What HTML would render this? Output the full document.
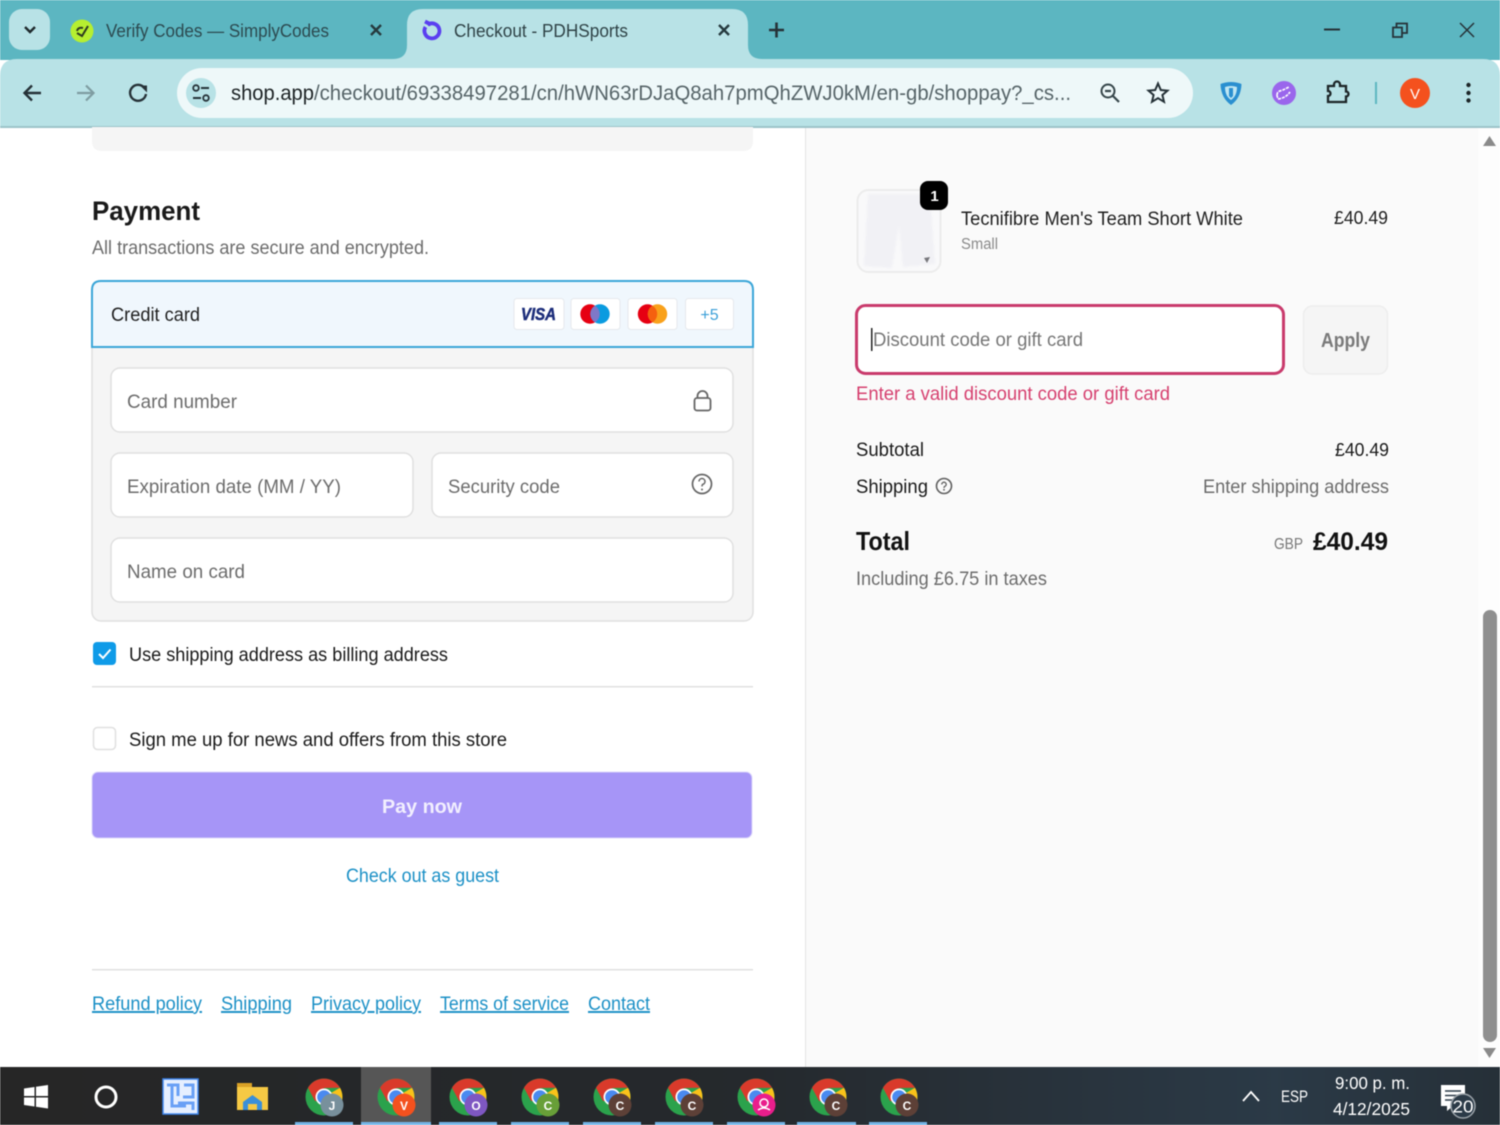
<!DOCTYPE html>
<html lang="en"><head><meta charset="utf-8"><title>Checkout - PDHSports</title>
<style>
html,body{margin:0;padding:0;width:1500px;height:1125px;overflow:hidden;background:#fff}
svg{display:block;filter:blur(.45px)}
text{font-family:"Liberation Sans",sans-serif;white-space:pre}
.g{fill:#6c6c6c}.d{fill:#1a1a1a}.l{fill:#1b90c6;text-decoration:underline}
</style></head><body>
<svg width="1500" height="1125" viewBox="0 0 1500 1125" xmlns="http://www.w3.org/2000/svg">
<defs>
<g id="ch">
<circle r="18.500" fill="#2ba24c"/>
<path d="M0,0L16,-9.200A18.500,18.500 0 0 1 3,18.200Z" fill="#f9c21a"/>
<path d="M-16,-9.200A18.500,18.500 0 0 1 16,-9.200L0,-9L-7,4L-9,4Z" fill="#d93a2b"/>
<circle r="8.500" fill="#fff"/><circle r="6.800" fill="#4a8af0"/>
</g>
<filter id="soft"><feGaussianBlur stdDeviation="1.200"/></filter>
</defs>

<!-- page -->
<rect width="1500" height="1125" fill="#fff"/>
<rect x="806" y="127" width="672" height="940" fill="#fafafa"/>
<rect x="805" y="127" width="1" height="940" fill="#e3e3e3"/>
<rect x="1478" y="127" width="22" height="940" fill="#fdfdfd"/>
<path d="M1483,146L1489.500,136L1496,146Z" fill="#8a8a8a"/>
<path d="M1483,1048L1489.500,1058L1496,1048Z" fill="#8a8a8a"/>
<rect x="1483" y="610" width="14" height="432" rx="7" fill="#8f8f8f"/>

<!-- chrome frame -->
<rect width="1500" height="60" fill="#5cb6c1"/>
<path d="M0,127V76Q0,59 17,59H1483Q1500,59 1500,76V127Z" fill="#b8e2e6"/>
<rect y="126" width="1500" height="2" fill="#9cc3c9"/>
<rect x="9" y="9" width="41" height="41" rx="13" fill="#b8e2e6"/>
<path d="M25,27L30,32L35,27" fill="none" stroke="#1f2a2d" stroke-width="2.400"/>
<path d="M393,59Q407,59 407,45V25Q407,9 423,9H732Q748,9 748,25V45Q748,59 762,59Z" fill="#b8e2e6"/>

<circle cx="82" cy="31" r="11.500" fill="#b6ef30"/>
<path d="M77,33L82,36L88,26M77,31Q78,27 83,28" fill="none" stroke="#2d3a20" stroke-width="2"/>
<text x="106" y="37" font-size="18.500" fill="#2c4a50" textLength="223" lengthAdjust="spacingAndGlyphs">Verify Codes — SimplyCodes</text>
<path d="M371,25L381,35M381,25L371,35" stroke="#263a3e" stroke-width="2.400"/>
<path d="M427.500,24.800A7.500,7.500 0 1 1 425.500,27M425,21.500L431,24.500" fill="none" stroke="#5a3ff0" stroke-width="3.800"/>
<text x="454" y="37" font-size="18.500" fill="#2f4347" textLength="174" lengthAdjust="spacingAndGlyphs">Checkout - PDHSports</text>
<path d="M719,25L729,35M729,25L719,35" stroke="#263a3e" stroke-width="2.400"/>
<path d="M769,30H784M776.500,22.500V37.500" stroke="#263238" stroke-width="2.600"/>
<path d="M1324,29.500H1340" stroke="#263238" stroke-width="2"/>
<path d="M1393,27.500V37H1402V27.500ZM1396.500,27.500V23.500H1407V33H1402" fill="none" stroke="#263238" stroke-width="1.800"/>
<path d="M1460,23L1474,37M1474,23L1460,37" stroke="#263238" stroke-width="1.500"/>

<!-- toolbar -->
<path d="M41,93H25M32,85.500L24.500,93L32,100.500" fill="none" stroke="#263238" stroke-width="2.400"/>
<path d="M93,93H77M86,85.500L93.500,93L86,100.500" fill="none" stroke="#7f9da2" stroke-width="2.200"/>
<path d="M144.500,88A8,8 0 1 0 146,94" fill="none" stroke="#263238" stroke-width="2.400"/>
<path d="M140,85.500H147V92.500Z" fill="#263238"/>
<rect x="177" y="68" width="1016" height="50" rx="25" fill="#eef8f9"/>
<circle cx="201" cy="93" r="15" fill="#b8e2e6"/>
<circle cx="196" cy="88" r="2.800" fill="none" stroke="#263238" stroke-width="1.800"/>
<path d="M201,88H209M193,98H201" stroke="#263238" stroke-width="2"/>
<circle cx="206" cy="98" r="2.800" fill="none" stroke="#263238" stroke-width="1.800"/>
<text x="231" y="100" font-size="21" fill="#1c2224" textLength="83" lengthAdjust="spacingAndGlyphs">shop.app</text>
<text x="314" y="100" font-size="21" fill="#566468" textLength="757" lengthAdjust="spacingAndGlyphs">/checkout/69338497281/cn/hWN63rDJaQ8ah7pmQhZWJ0kM/en-gb/shoppay?_cs...</text>
<circle cx="1108" cy="91" r="6.500" fill="none" stroke="#37474b" stroke-width="2"/>
<path d="M1105,91H1111M1113,96L1119,102" stroke="#37474b" stroke-width="2.200"/>
<path d="M1158,83.500L1160.800,90L1167.500,90.600L1162.400,95L1164,101.800L1158,98.200L1152,101.800L1153.600,95L1148.500,90.600L1155.200,90Z" fill="none" stroke="#263238" stroke-width="2"/>
<path d="M1220.500,84Q1231,80 1241.500,84Q1241,98 1231,105Q1221,98 1220.500,84Z" fill="#2a8fd0"/>
<path d="M1225,87Q1231,85 1237,87Q1237,96 1231,100Q1225,96 1225,87Z" fill="#bfe6f2"/>
<path d="M1229,88H1233V96L1231,98L1229,96Z" fill="#2a8fd0"/>
<circle cx="1284" cy="93" r="12" fill="#9a66ec"/>
<path d="M1277,95Q1277,91 1282,90.500L1289,87M1278,99Q1286,98 1290,92M1277,95Q1277,98 1279,98" fill="none" stroke="#fff" stroke-width="1.600" stroke-dasharray="3 1"/>
<path d="M1328,86H1334V84.500A3,3 0 0 1 1340,84.500V86H1346V91.500A2.500,2.500 0 0 1 1346,96.500V102H1328V96A2.500,2.500 0 0 0 1328,91Z" fill="none" stroke="#1d2628" stroke-width="2.300"/>
<rect x="1375" y="82" width="2" height="22" fill="#5cb6c1"/>
<circle cx="1415" cy="93" r="15" fill="#f4511e"/>
<text x="1415" y="99" font-size="15" fill="#fff" text-anchor="middle">V</text>
<circle cx="1468.500" cy="85" r="2.200" fill="#1d2628"/><circle cx="1468.500" cy="93" r="2.200" fill="#1d2628"/><circle cx="1468.500" cy="100.500" r="2.200" fill="#1d2628"/>

<!-- left column -->
<path d="M92,127H753V141Q753,151 743,151H102Q92,151 92,141Z" fill="#f5f5f5"/>
<text x="92" y="220" font-size="27" font-weight="bold" fill="#1a1a1a" textLength="108" lengthAdjust="spacingAndGlyphs">Payment</text>
<text x="92" y="254" font-size="19.500" class="g" textLength="337" lengthAdjust="spacingAndGlyphs">All transactions are secure and encrypted.</text>

<rect x="92" y="281" width="661" height="340" rx="9" fill="#f5f5f5" stroke="#e0e0e0" stroke-width="1.500"/>
<path d="M92,347V290Q92,281 101,281H744Q753,281 753,290V347Z" fill="#f0f7fd" stroke="#3ba6d8" stroke-width="2"/>
<text x="111" y="321" font-size="19.500" fill="#1f1f1f" textLength="89" lengthAdjust="spacingAndGlyphs">Credit card</text>
<g fill="#fff" stroke="#e6e9ed">
<rect x="514" y="298.500" width="50" height="31" rx="3"/><rect x="571" y="298.500" width="49" height="31" rx="3"/>
<rect x="628" y="298.500" width="49" height="31" rx="3"/><rect x="685.500" y="298.500" width="48" height="31" rx="3"/>
</g>
<text x="521" y="320" font-size="17.500" font-weight="bold" font-style="italic" fill="#1c2d7a" stroke="#1c2d7a" stroke-width=".5" textLength="35" lengthAdjust="spacingAndGlyphs">VISA</text>
<circle cx="590" cy="314" r="9.700" fill="#e60012"/><circle cx="600" cy="314" r="9.700" fill="#0a9be0"/>
<path d="M595,305.700A9.700,9.700 0 0 1 595,322.300A9.700,9.700 0 0 1 595,305.700Z" fill="#7f78c8"/>
<circle cx="647.500" cy="314" r="9.700" fill="#e60012"/><circle cx="657.500" cy="314" r="9.700" fill="#f9a11b"/>
<path d="M652.500,305.700A9.700,9.700 0 0 1 652.500,322.300A9.700,9.700 0 0 1 652.500,305.700Z" fill="#f5600f"/>
<text x="709.500" y="320" font-size="16" fill="#3a9fd8" text-anchor="middle">+5</text>

<g fill="#fff" stroke="#e0e0e0" stroke-width="1.500">
<rect x="111" y="368" width="622" height="64" rx="9"/>
<rect x="111" y="453" width="302" height="64" rx="9"/>
<rect x="432" y="453" width="301" height="64" rx="9"/>
<rect x="111" y="538" width="622" height="64" rx="9"/>
</g>
<text x="127" y="408" font-size="19.500" class="g" textLength="110" lengthAdjust="spacingAndGlyphs">Card number</text>
<text x="127" y="493" font-size="19.500" class="g" textLength="214" lengthAdjust="spacingAndGlyphs">Expiration date (MM / YY)</text>
<text x="448" y="493" font-size="19.500" class="g" textLength="112" lengthAdjust="spacingAndGlyphs">Security code</text>
<text x="127" y="578" font-size="19.500" class="g" textLength="118" lengthAdjust="spacingAndGlyphs">Name on card</text>
<rect x="694.500" y="398" width="16" height="12.500" rx="2.500" fill="none" stroke="#666" stroke-width="1.800"/>
<path d="M697.500,398V396A5,5 0 0 1 707.500,396V398" fill="none" stroke="#666" stroke-width="1.800"/>
<circle cx="702" cy="484" r="9.500" fill="none" stroke="#666" stroke-width="1.700"/>
<path d="M699,481.500A3,3 0 1 1 702.500,484.500Q702,485 702,486.500" fill="none" stroke="#666" stroke-width="1.500"/><circle cx="702" cy="489.500" r="1" fill="#666"/>

<rect x="93" y="642" width="23" height="23" rx="4" fill="#0f9be8"/>
<path d="M99,654L103,658L110.500,649.500" fill="none" stroke="#fff" stroke-width="2"/>
<text x="129" y="661" font-size="19.500" class="d" textLength="319" lengthAdjust="spacingAndGlyphs">Use shipping address as billing address</text>
<rect x="92" y="686" width="661" height="1.500" fill="#e0e0e0"/>
<rect x="93.500" y="727.500" width="22" height="22" rx="4" fill="#fff" stroke="#e0e0e0" stroke-width="1.500"/>
<text x="129" y="746" font-size="19.500" class="d" textLength="378" lengthAdjust="spacingAndGlyphs">Sign me up for news and offers from this store</text>
<rect x="92" y="772" width="660" height="66" rx="6" fill="#a695f7" stroke="#ddd8fb"/>
<text x="382" y="813" font-size="19.500" font-weight="bold" fill="#f2effe" textLength="80" lengthAdjust="spacingAndGlyphs">Pay now</text>
<text x="346" y="882" font-size="19.500" fill="#1b90c6" textLength="153" lengthAdjust="spacingAndGlyphs">Check out as guest</text>
<rect x="92" y="969" width="661" height="1.500" fill="#e0e0e0"/>
<text x="92" y="1010" font-size="19.500" class="l" textLength="110" lengthAdjust="spacingAndGlyphs">Refund policy</text>
<text x="221" y="1010" font-size="19.500" class="l" textLength="71" lengthAdjust="spacingAndGlyphs">Shipping</text>
<text x="311" y="1010" font-size="19.500" class="l" textLength="110" lengthAdjust="spacingAndGlyphs">Privacy policy</text>
<text x="440" y="1010" font-size="19.500" class="l" textLength="129" lengthAdjust="spacingAndGlyphs">Terms of service</text>
<text x="588" y="1010" font-size="19.500" class="l" textLength="62" lengthAdjust="spacingAndGlyphs">Contact</text>

<!-- right column -->
<rect x="857.500" y="190" width="83" height="82" rx="11" fill="#f9f9fa" stroke="#ececec" stroke-width="2"/>
<path d="M868,194H930L935,264L903,267L899,225L892,268L864,266Z" fill="#f1f1f5" filter="url(#soft)"/>
<path d="M924,258L930,257L927,263Z" fill="#77777c"/>
<rect x="920" y="181" width="28" height="29" rx="8" fill="#000"/>
<text x="934.500" y="201" font-size="15" font-weight="bold" fill="#fff" text-anchor="middle">1</text>
<text x="961" y="225" font-size="19.500" fill="#1f1f1f" textLength="282" lengthAdjust="spacingAndGlyphs">Tecnifibre Men's Team Short White</text>
<text x="961" y="249" font-size="15.500" fill="#8a8a8a" textLength="37" lengthAdjust="spacingAndGlyphs">Small</text>
<text x="1334" y="224" font-size="18.500" fill="#1f1f1f" textLength="54" lengthAdjust="spacingAndGlyphs">£40.49</text>

<rect x="856.500" y="305.500" width="427" height="68" rx="9" fill="#fff" stroke="#c93a6c" stroke-width="3"/>
<rect x="871" y="328" width="1.500" height="23" fill="#222"/>
<text x="873" y="346" font-size="19.500" fill="#767676" textLength="210" lengthAdjust="spacingAndGlyphs">Discount code or gift card</text>
<rect x="1303.500" y="306" width="84" height="68" rx="9" fill="#f5f5f5" stroke="#ededed" stroke-width="1.500"/>
<text x="1321" y="347" font-size="20" font-weight="bold" fill="#7a7a7a" textLength="49" lengthAdjust="spacingAndGlyphs">Apply</text>
<text x="856" y="400" font-size="19.500" fill="#d6406f" textLength="314" lengthAdjust="spacingAndGlyphs">Enter a valid discount code or gift card</text>

<text x="856" y="456" font-size="19.500" class="d" textLength="68" lengthAdjust="spacingAndGlyphs">Subtotal</text>
<text x="1335" y="456" font-size="18.500" class="d" textLength="54" lengthAdjust="spacingAndGlyphs">£40.49</text>
<text x="856" y="493" font-size="19.500" class="d" textLength="72" lengthAdjust="spacingAndGlyphs">Shipping</text>
<circle cx="944" cy="486" r="7.500" fill="none" stroke="#5f5f5f" stroke-width="1.600"/>
<path d="M941.800,484.500A2.200,2.200 0 1 1 944.500,486.500Q944,487 944,488" fill="none" stroke="#5f5f5f" stroke-width="1.300"/><circle cx="944" cy="489.800" r=".9" fill="#5f5f5f"/>
<text x="1203" y="493" font-size="19.500" class="g" textLength="186" lengthAdjust="spacingAndGlyphs">Enter shipping address</text>
<text x="856" y="550" font-size="26" font-weight="bold" fill="#111" textLength="54" lengthAdjust="spacingAndGlyphs">Total</text>
<text x="1274" y="549" font-size="15.500" fill="#777" textLength="29" lengthAdjust="spacingAndGlyphs">GBP</text>
<text x="1313" y="550" font-size="25" font-weight="bold" fill="#111" textLength="75" lengthAdjust="spacingAndGlyphs">£40.49</text>
<text x="856" y="585" font-size="19.500" class="g" textLength="191" lengthAdjust="spacingAndGlyphs">Including £6.75 in taxes</text>

<!-- taskbar -->
<defs><linearGradient id="tb" x1="0" x2="1" y1="0" y2="0"><stop offset="0" stop-color="#262626"/><stop offset=".5" stop-color="#25292d"/><stop offset=".85" stop-color="#2b3a47"/><stop offset="1" stop-color="#263038"/></linearGradient></defs>
<rect y="1067" width="1500" height="58" fill="url(#tb)"/>
<rect x="361" y="1067" width="70" height="55" fill="#565656"/>
<path d="M24,1088.500L34.500,1087V1096H24ZM36,1086.800L48,1085V1096H36ZM24,1097.500H34.500V1106.500L24,1105ZM36,1097.500H48V1108.500L36,1106.700Z" fill="#fff"/>
<circle cx="106" cy="1097" r="10" fill="none" stroke="#fff" stroke-width="3"/>
<rect x="163" y="1079" width="35" height="35" fill="#e6efff" stroke="#3f86ee" stroke-width="1.500"/>
<path d="M167,1085H178V1096M172,1085V1106H186M184,1085H193V1097H183M178,1103H193V1110" fill="none" stroke="#6aa0f5" stroke-width="3"/>
<path d="M237,1085Q237,1083 239,1083H248L252,1087H268V1110H237Z" fill="#f6c944"/>
<rect x="237" y="1083" width="15" height="4" fill="#d9a126"/>
<path d="M243,1110V1102L252.500,1095L262,1102V1110H257V1104H248V1110Z" fill="#3a8fd8"/>

<g font-weight="bold">
<use href="#ch" x="324" y="1097"/><circle cx="332" cy="1105" r="11.500" fill="#78909c"/><text x="332" y="1110" font-size="12" fill="#fff" text-anchor="middle">J</text>
<use href="#ch" x="396" y="1097"/><circle cx="404" cy="1105" r="11.500" fill="#f4511e"/><text x="404" y="1110" font-size="12" fill="#fff" text-anchor="middle">V</text>
<use href="#ch" x="468" y="1097"/><circle cx="476" cy="1105" r="11.500" fill="#7e57c2"/><text x="476" y="1110" font-size="12" fill="#fff" text-anchor="middle">O</text>
<use href="#ch" x="540" y="1097"/><circle cx="548" cy="1105" r="11.500" fill="#689f38"/><text x="548" y="1110" font-size="12" fill="#fff" text-anchor="middle">C</text>
<use href="#ch" x="612" y="1097"/><circle cx="620" cy="1105" r="11.500" fill="#5d4037"/><text x="620" y="1110" font-size="12" fill="#fff" text-anchor="middle">C</text>
<use href="#ch" x="684" y="1097"/><circle cx="692" cy="1105" r="11.500" fill="#5d4037"/><text x="692" y="1110" font-size="12" fill="#fff" text-anchor="middle">C</text>
<use href="#ch" x="756" y="1097"/><circle cx="764" cy="1105" r="11.500" fill="#e91e8c"/><circle cx="764" cy="1103" r="4" fill="none" stroke="#fff" stroke-width="1.500"/><path d="M758,1110Q764,1106 770,1110" fill="none" stroke="#fff" stroke-width="1.500"/>
<use href="#ch" x="828" y="1097"/><circle cx="836" cy="1105" r="11.500" fill="#5d4037"/><text x="836" y="1110" font-size="12" fill="#fff" text-anchor="middle">C</text>
<use href="#ch" x="899" y="1097"/><circle cx="907" cy="1105" r="11.500" fill="#5d4037"/><text x="907" y="1110" font-size="12" fill="#fff" text-anchor="middle">C</text>
</g>
<g fill="#74b4e6">
<rect x="295" y="1122" width="58" height="3"/><rect x="361" y="1122" width="70" height="3"/><rect x="439" y="1122" width="58" height="3"/>
<rect x="511" y="1122" width="58" height="3"/><rect x="583" y="1122" width="58" height="3"/><rect x="655" y="1122" width="58" height="3"/>
<rect x="727" y="1122" width="58" height="3"/><rect x="797" y="1122" width="59" height="3"/><rect x="869" y="1122" width="58" height="3"/>
</g>
<path d="M1243,1101L1251,1092L1259,1101" fill="none" stroke="#fff" stroke-width="1.800"/>
<text x="1281" y="1102" font-size="17" fill="#fff" textLength="27" lengthAdjust="spacingAndGlyphs">ESP</text>
<text x="1335" y="1089" font-size="17.500" fill="#fff" textLength="75" lengthAdjust="spacingAndGlyphs">9:00 p. m.</text>
<text x="1333" y="1115" font-size="17.500" fill="#fff" textLength="77" lengthAdjust="spacingAndGlyphs">4/12/2025</text>
<path d="M1441,1085H1465V1106H1453L1447,1111V1106H1441Z" fill="#fff"/>
<path d="M1445,1091H1461M1445,1095.500H1461M1445,1100H1456" stroke="#2b3a47" stroke-width="1.500"/>
<circle cx="1463" cy="1106" r="12" fill="#2b3a47" stroke="#9aa2a8" stroke-width="1.500"/>
<text x="1463" y="1112.500" font-size="17.500" fill="#fff" text-anchor="middle" textLength="21" lengthAdjust="spacingAndGlyphs">20</text>
</svg>
</body></html>
